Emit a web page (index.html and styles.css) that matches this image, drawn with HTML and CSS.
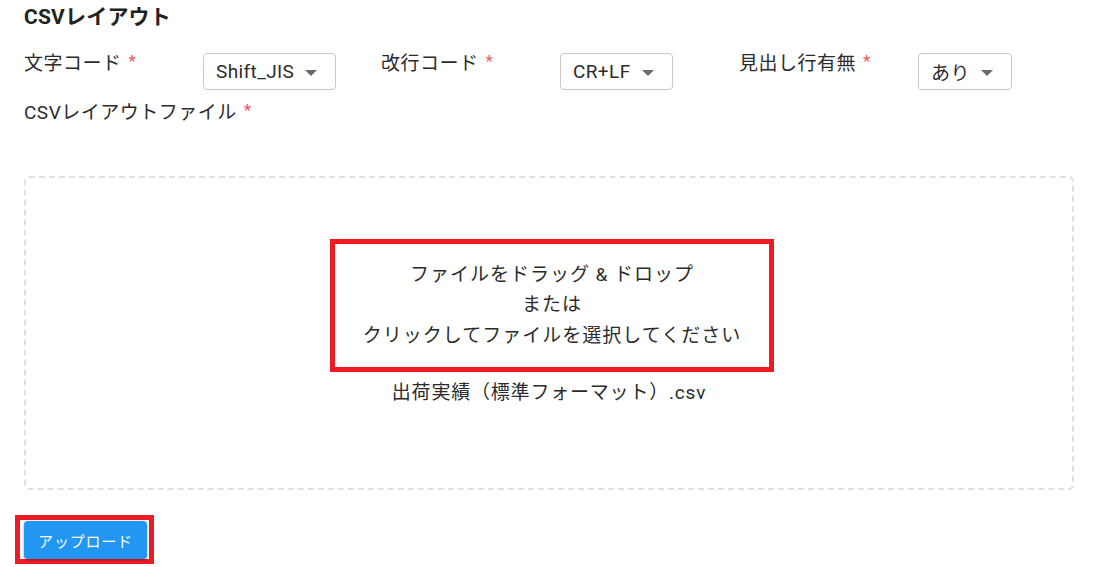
FILE: index.html
```html
<!DOCTYPE html>
<html lang="ja">
<head>
<meta charset="utf-8">
<title>CSVレイアウト</title>
<link rel="stylesheet" href="styles.css">
</head>
<body>
<div class="page">
  <h2 class="title">CSVレイアウト</h2>
  <div class="fields">
    <div class="field">
      <div class="label">文字コード<span class="req">*</span></div>
      <div class="select"><span class="value">Shift_JIS</span><span class="arrow"></span></div>
    </div>
    <div class="field">
      <div class="label">改行コード<span class="req">*</span></div>
      <div class="select"><span class="value">CR+LF</span><span class="arrow"></span></div>
    </div>
    <div class="field">
      <div class="label">見出し行有無<span class="req">*</span></div>
      <div class="select"><span class="value">あり</span><span class="arrow"></span></div>
    </div>
  </div>
  <div class="label file-label">CSVレイアウトファイル<span class="req">*</span></div>
  <div class="dropzone">
    <div class="drop-msg">
      <div>ファイルをドラッグ &amp; ドロップ</div>
      <div>または</div>
      <div>クリックしてファイルを選択してください</div>
    </div>
    <div class="filename">出荷実績（標準フォーマット）.csv</div>
  </div>
  <div class="btn-wrap">
    <button class="btn" type="button">アップロード</button>
  </div>
</div>
</body>
</html>
```

FILE: styles.css
```css
html, body {
  margin: 0;
  padding: 0;
  background: #ffffff;
}
body {
  font-family: "Roboto", "Noto Sans CJK JP", sans-serif;
  color: #2b2b2b;
}
.page {
  padding: 3px 23px 0 24px;
}
.title {
  margin: 0;
  height: 28px;
  font-size: 21px;
  font-weight: 700;
  line-height: 28px;
  letter-spacing: 0.2px;
  color: #222;
}
.fields {
  display: grid;
  grid-template-columns: 357px 358px 357px;
  margin-top: 16px;
}
.field {
  display: flex;
  align-items: flex-start;
}
.label {
  height: 28px;
  font-size: 19px;
  line-height: 28px;
  letter-spacing: 0.5px;
}
.field .label {
  width: 179px;
  flex: none;
}
.req {
  color: #f4555e;
  font-size: 17px;
  margin-left: 7px;
  vertical-align: 3px;
}
.select {
  margin-top: 6px;
  height: 37px;
  box-sizing: border-box;
  border: 1px solid #c8c8c8;
  border-radius: 4px;
  display: flex;
  align-items: center;
  padding: 0 18px 0 12px;
  font-size: 19px;
  letter-spacing: 0.4px;
  color: #2b2b2b;
}
.arrow {
  width: 0;
  height: 0;
  border-left: 6px solid transparent;
  border-right: 6px solid transparent;
  border-top: 6px solid #6a6a6a;
  margin-left: 11px;
  margin-top: 2px;
}
.file-label {
  margin-top: 6px;
}
.dropzone {
  margin-top: 52px;
  height: 314px;
  box-sizing: border-box;
  border: 2px dashed #e0e0e0;
  border-radius: 5px;
  display: flex;
  flex-direction: column;
  align-items: center;
  padding-top: 61px;
}
.drop-msg {
  width: 444px;
  height: 133px;
  box-sizing: border-box;
  border: 5px solid #ed1c24;
  display: flex;
  flex-direction: column;
  justify-content: center;
  align-items: center;
  font-size: 19px;
  line-height: 30.5px;
  letter-spacing: 1px;
  margin-left: 6px;
}
.filename {
  margin-top: 6px;
  height: 30px;
  font-size: 19px;
  line-height: 30px;
  letter-spacing: 0.8px;
}
.btn-wrap {
  display: inline-block;
  margin-top: 25px;
  margin-left: -9px;
  border: 5px solid #ed1c24;
  padding: 1px 2px 0 4px;
}
.btn {
  display: block;
  width: 123px;
  height: 38px;
  border: none;
  border-radius: 4px;
  background: #2196f3;
  color: #fff;
  font-family: "Roboto", "Noto Sans CJK JP", sans-serif;
  font-size: 15px;
  letter-spacing: 0.8px;
  box-shadow: 0 1px 3px rgba(0,0,0,0.35);
  padding: 0;
}
```
